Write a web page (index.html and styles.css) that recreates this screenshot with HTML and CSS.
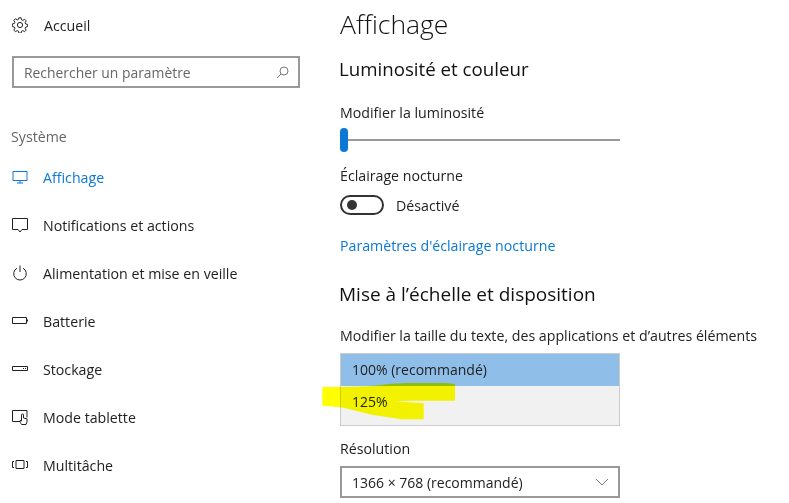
FILE: index.html
```html
<!DOCTYPE html>
<html lang="fr">
<head>
    <meta charset="UTF-8">
    <title>Paramètres - Affichage</title>
    <link rel="stylesheet" href="styles.css">
</head>
<body>
    <div class="window">
        <div class="sidebar">
            <div class="home">
                <svg class="icon" viewBox="0 0 16 16"><circle cx="8" cy="8" r="2.600"/><path d="M6.900.8h2.200l.4 2 1.300.6 1.800-1.100 1.600 1.600-1.100 1.800.6 1.300 2 .4v2.200l-2 .4-.6 1.300 1.100 1.800-1.600 1.600-1.800-1.100-1.300.6-.4 2H6.900l-.4-2-1.300-.6-1.800 1.100-1.600-1.600 1.100-1.800-.6-1.300-2-.4V6.900l2-.4.6-1.300L1.800 3.400l1.600-1.600 1.800 1.100 1.300-.6z"/></svg>
                <span>Accueil</span>
            </div>
            <div class="search">
                <span>Rechercher un paramètre</span>
                <svg viewBox="0 0 13 13"><circle cx="8" cy="5" r="4"/><path d="M5 8L1 12"/></svg>
            </div>
            <div class="group-label">Système</div>
            <div class="nav">
                <div class="nav-item active">
                    <svg class="icon" viewBox="0 0 16 16"><path d="M1 2.500h14v9H1zM8 11.500v2.500M5 14h6"/></svg>
                    <span>Affichage</span>
                </div>
                <div class="nav-item">
                    <svg class="icon" viewBox="0 0 16 16"><path d="M.5 1.500h15v11H10L8 15l-2-2.500H.5z"/></svg>
                    <span>Notifications et actions</span>
                </div>
                <div class="nav-item">
                    <svg class="icon" viewBox="0 0 16 16"><path d="M5 3.200a6.300 6.300 0 1 0 6 0M8 .5V7"/></svg>
                    <span>Alimentation et mise en veille</span>
                </div>
                <div class="nav-item">
                    <svg class="icon" viewBox="0 0 16 16"><path d="M.5 4.500h14v6H.5zM15.500 6.500v2"/></svg>
                    <span>Batterie</span>
                </div>
                <div class="nav-item">
                    <svg class="icon" viewBox="0 0 16 16"><path d="M.5 5.500h15v4H.5zM11 7.500h1M13 7.500h1"/></svg>
                    <span>Stockage</span>
                </div>
                <div class="nav-item">
                    <svg class="icon" viewBox="0 0 16 16"><path d="M8 12.500H.5v-11h14.500v7M9.500 15.500C8.500 14 8 13 8 11.500l1.500.5V6c0-1.500 2-1.500 2 0v3l3.500.8V13l-1 2.500z"/></svg>
                    <span>Mode tablette</span>
                </div>
                <div class="nav-item">
                    <svg class="icon" viewBox="0 0 16 16"><path d="M4 3.500h8v8H4zM2 4.500H.5v6H2M14 4.500h1.500v6H14"/></svg>
                    <span>Multitâche</span>
                </div>
            </div>
        </div>

        <div class="main">
            <h1>Affichage</h1>
            <h2>Luminosité et couleur</h2>
            <div class="label label-bright">Modifier la luminosité</div>
            <div class="slider"><div class="thumb"></div></div>
            <div class="label">Éclairage nocturne</div>
            <div class="toggle-row">
                <div class="toggle"><div class="knob"></div></div>
                <span>Désactivé</span>
            </div>
            <a class="link">Paramètres d'éclairage nocturne</a>
            <h2 class="scale-title">Mise à l’échelle et disposition</h2>
            <div class="label label-size">Modifier la taille du texte, des applications et d’autres éléments</div>
            <div class="dropdown-list">
                <div class="option selected">100% (recommandé)</div>
                <div class="option">125%</div>
            </div>
            <div class="label label-res">Résolution</div>
            <div class="select">
                <span>1366 × 768 (recommandé)</span>
                <svg viewBox="0 0 14 8"><path d="M1 1l6 6 6-6"/></svg>
            </div>
        </div>

        <!-- highlighter scribble over the list -->
        <svg class="marker" viewBox="0 0 789 503"><polygon points="322.300,387 341,387 368,386.300 381,385 391,383.700 408,383 445,383 455,384 455,400.700 412,400.700 395,401.300 423.700,403.300 423.700,419.300 401.700,419.300 371.700,414.700 351.700,409.700 341,407.300 322.300,405.700"/></svg>
    </div>
</body>
</html>
```

FILE: styles.css
```css
html, body {
    margin: 0;
    padding: 0;
    height: 503px;
    overflow: hidden;
    background: #fff;
}
body {
    font-family: 'Open Sans', 'Liberation Sans', sans-serif;
    font-size: 14.2px;
    color: #222;
}
.window {
    position: relative;
    display: flex;
    height: 503px;
    overflow: hidden;
}
.sidebar {
    width: 340px;
    flex: none;
    padding-left: 12px;
    box-sizing: border-box;
}
.icon {
    width: 16px;
    height: 16px;
    flex: none;
    fill: none;
    stroke: #222;
    stroke-width: 1;
}
.home {
    display: flex;
    align-items: center;
    gap: 16px;
    height: 20px;
    margin-top: 15px;
}
.search {
    display: flex;
    align-items: center;
    justify-content: space-between;
    width: 288px;
    height: 32px;
    margin-top: 21px;
    padding: 0 9px 0 10px;
    box-sizing: border-box;
    border: 2px solid #999;
    color: #666;
    font-size: 13.9px;
}
.search svg {
    width: 13px;
    height: 13px;
    fill: none;
    stroke: #777;
}
.group-label {
    margin-top: 39px;
    margin-left: -1px;
    line-height: 20px;
    color: #666;
}
.nav {
    margin-top: 6px;
}
.nav-item {
    display: flex;
    align-items: center;
    gap: 15px;
    height: 48px;
}
.nav-item.active {
    color: #0a78d4;
}
.nav-item.active .icon {
    stroke: #0a78d4;
}
.main {
    flex: 1;
}
h1 {
    margin: 5px 0 0;
    font-size: 26.5px;
    font-weight: 300;
    line-height: 38px;
    color: #111;
}
h2 {
    margin: 13px 0 0 -1px;
    font-size: 18.7px;
    font-weight: 400;
    line-height: 26px;
    color: #111;
}
.label {
    line-height: 20px;
}
.label-bright {
    margin-top: 21px;
}
.slider {
    position: relative;
    width: 280px;
    height: 2px;
    margin: 16px 0 25px;
    background: #999;
}
.thumb {
    position: absolute;
    left: 0;
    top: -11px;
    width: 8px;
    height: 24px;
    border-radius: 4px;
    background: #0a78d4;
}
.toggle-row {
    display: flex;
    align-items: center;
    gap: 12px;
    height: 20px;
    margin-top: 9px;
}
.toggle {
    display: flex;
    align-items: center;
    width: 35px;
    height: 16px;
    padding-left: 5px;
    border: 2px solid #333;
    border-radius: 10px;
}
.knob {
    width: 10px;
    height: 10px;
    border-radius: 50%;
    background: #333;
}
.link {
    display: block;
    margin-top: 21px;
    line-height: 20px;
    color: #0a78d4;
}
h2.scale-title {
    margin-top: 25px;
    font-size: 19px;
}
.label-size {
    margin-top: 19px;
}
.dropdown-list {
    width: 278px;
    margin-top: 7px;
    border: 1px solid #ccc;
    background: #f1f1f1;
    font-size: 14px;
}
.option {
    height: 32px;
    line-height: 32px;
    padding-left: 11px;
}
.option.selected {
    background: #8fbfe8;
}
.option + .option {
    height: 39px;
}
.label-res {
    margin-top: 13px;
}
.select {
    display: flex;
    align-items: center;
    justify-content: space-between;
    width: 280px;
    height: 32px;
    margin-top: 7px;
    padding: 0 9px 0 10px;
    box-sizing: border-box;
    border: 2px solid #999;
    font-size: 14px;
}
.select svg {
    width: 14px;
    height: 8px;
    fill: none;
    stroke: #777;
}
.marker {
    position: absolute;
    left: 0;
    top: 0;
    width: 789px;
    height: 503px;
    mix-blend-mode: multiply;
    pointer-events: none;
}
.marker polygon {
    fill: #ffff00;
}
```
